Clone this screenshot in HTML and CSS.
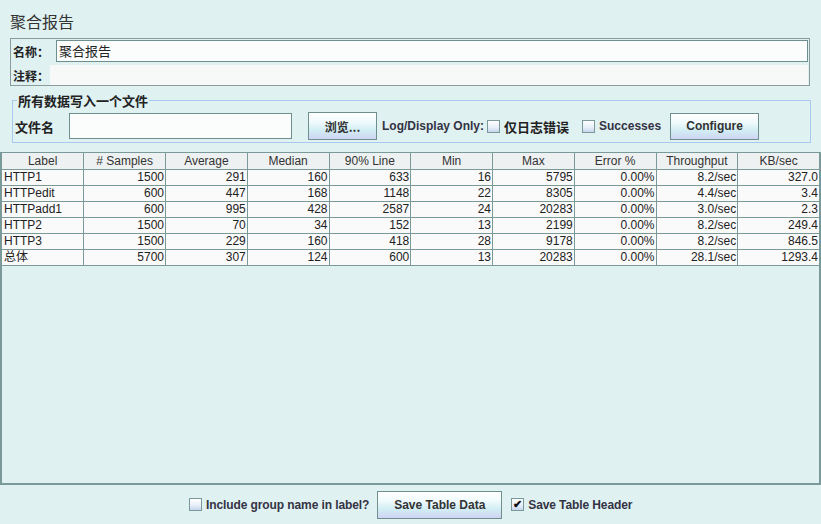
FILE: index.html
```html
<!DOCTYPE html>
<html>
<head>
<meta charset="utf-8">
<link rel="stylesheet" href="styles.css">
</head>
<body>
<div class="app">
  <div class="title">聚合报告</div>
  <div class="name-panel">
    <div class="prow r1">
      <span class="plabel w1">名称：</span>
      <div class="field namefield">聚合报告</div>
    </div>
    <div class="prow r2">
      <span class="plabel w2">注释：</span>
      <div class="field comment"></div>
    </div>
  </div>
  <fieldset class="file-panel">
    <legend>所有数据写入一个文件</legend>
    <div class="frow">
      <span class="flabel">文件名</span>
      <div class="field filefield"></div>
      <button class="btn browse">浏览...</button>
      <span class="blabel">Log/Display Only:</span>
      <span class="cb"></span><span class="blabel cjk">仅日志错误</span>
      <span class="cb cb2"></span><span class="blabel">Successes</span>
      <button class="btn configure">Configure</button>
    </div>
  </fieldset>
  <div class="table-pane">
    <table class="grid">
      <thead>
        <tr><th>Label</th><th># Samples</th><th>Average</th><th>Median</th><th>90% Line</th><th>Min</th><th>Max</th><th>Error %</th><th>Throughput</th><th>KB/sec</th></tr>
      </thead>
      <tbody>
        <tr><td class="l">HTTP1</td><td>1500</td><td>291</td><td>160</td><td>633</td><td>16</td><td>5795</td><td>0.00%</td><td>8.2/sec</td><td>327.0</td></tr>
        <tr><td class="l">HTTPedit</td><td>600</td><td>447</td><td>168</td><td>1148</td><td>22</td><td>8305</td><td>0.00%</td><td>4.4/sec</td><td>3.4</td></tr>
        <tr><td class="l">HTTPadd1</td><td>600</td><td>995</td><td>428</td><td>2587</td><td>24</td><td>20283</td><td>0.00%</td><td>3.0/sec</td><td>2.3</td></tr>
        <tr><td class="l">HTTP2</td><td>1500</td><td>70</td><td>34</td><td>152</td><td>13</td><td>2199</td><td>0.00%</td><td>8.2/sec</td><td>249.4</td></tr>
        <tr><td class="l">HTTP3</td><td>1500</td><td>229</td><td>160</td><td>418</td><td>28</td><td>9178</td><td>0.00%</td><td>8.2/sec</td><td>846.5</td></tr>
        <tr><td class="l">总体</td><td>5700</td><td>307</td><td>124</td><td>600</td><td>13</td><td>20283</td><td>0.00%</td><td>28.1/sec</td><td>1293.4</td></tr>
      </tbody>
    </table>
  </div>
  <div class="bottom">
    <span class="cb"></span><span class="blabel">Include group name in label?</span>
    <button class="btn savedata">Save Table Data</button>
    <span class="cb checked">&#10004;</span><span class="blabel">Save Table Header</span>
  </div>
</div>
</body>
</html>
```

FILE: styles.css
```css
html, body {
  margin: 0;
  padding: 0;
}
body {
  width: 821px;
  height: 524px;
  background: #e0f1f2;
  font-family: "Liberation Sans", Arial, "Noto Sans CJK SC", sans-serif;
  color: #222;
  overflow: hidden;
}
.app {
  display: flex;
  flex-direction: column;
  height: 524px;
}
.title {
  height: 28px;
  padding: 10px 0 0 10px;
  font-family: "Noto Sans CJK SC", sans-serif;
  font-size: 16px;
  line-height: 22px;
  color: #333;
}
.name-panel {
  margin: 0 11px 0 10px;
  height: 46px;
  border: 1px solid #8c9c9c;
  display: flex;
  flex-direction: column;
}
.prow {
  display: flex;
  align-items: center;
}
.r1 {
  height: 22px;
  padding-top: 1px;
}
.r2 {
  height: 20px;
  margin-top: 3px;
}
.plabel {
  font-family: "Noto Sans CJK SC", sans-serif;
  font-weight: bold;
  font-size: 12px;
  padding-left: 2px;
  color: #222;
}
.w1 { width: 43px; }
.w2 { width: 37px; }
.field {
  box-sizing: border-box;
  background: #fbfcfc;
}
.namefield {
  flex: 1;
  height: 22px;
  margin-right: 1px;
  border: 1px solid #6f8f8f;
  font-family: "Noto Sans CJK SC", sans-serif;
  font-size: 13px;
  line-height: 19px;
  padding-left: 2px;
}
.comment {
  flex: 1;
  height: 20px;
  margin-right: 1px;
  background: #f7f9f9;
}
.file-panel {
  margin: 7px 10px 0 12px;
  padding: 0 0 2px 2px;
  border: 1px solid #a8c8ee;
  height: 46px;
}
.file-panel legend {
  font-family: "Noto Sans CJK SC", sans-serif;
  font-weight: bold;
  font-size: 13px;
  line-height: 15px;
  padding: 0 1px;
  margin-left: 2px;
  color: #222;
}
.frow {
  display: flex;
  align-items: center;
  height: 34px;
  margin-top: 1px;
}
.flabel {
  font-family: "Noto Sans CJK SC", sans-serif;
  font-weight: bold;
  font-size: 13px;
  width: 54px;
}
.filefield {
  width: 223px;
  height: 26px;
  border: 1px solid #6f8f8f;
  margin-right: 16px;
}
.btn {
  box-sizing: border-box;
  border: 1px solid #6f8f8f;
  background: linear-gradient(#ffffff 0%, #f0fafc 35%, #d2eef4 65%, #cfd4f2 100%);
  font-family: "Liberation Sans", Arial, "Noto Sans CJK SC", sans-serif;
  font-weight: bold;
  font-size: 12px;
  color: #333;
  padding: 0;
  margin: 0;
}
.browse {
  width: 69px;
  height: 28px;
  margin-right: 5px;
  font-family: "Noto Sans CJK SC", sans-serif;
}
.blabel {
  font-weight: bold;
  font-size: 12px;
  color: #333344;
  white-space: nowrap;
}
.blabel.cjk {
  font-family: "Noto Sans CJK SC", sans-serif;
  font-size: 13px;
  color: #222;
  margin-right: 13px;
}
.cb {
  box-sizing: border-box;
  display: inline-block;
  width: 13px;
  height: 13px;
  border: 1px solid #7a9a9a;
  background: linear-gradient(#ffffff, #e6eef8 60%, #c8d4ee);
  margin: 0 4px 0 3px;
  font-size: 11px;
  line-height: 11px;
  text-align: center;
  color: #111;
}
.cb2 { margin-left: 0; }
.configure {
  width: 89px;
  height: 27px;
  margin-left: 9px;
}
.table-pane {
  margin-top: 9px;
  flex: 1;
  box-sizing: border-box;
  border-left: 2px solid #7a9a9a;
  border-bottom: 2px solid #7a9a9a;
  border-right: 2px solid #7a9a9a;
  border-top: 1px solid #7a9a9a;
}
.grid {
  border-collapse: collapse;
  table-layout: fixed;
  width: 818px;
  font-size: 12px;
  color: #222;
}
.grid th {
  height: 16px;
  font-weight: normal;
  background: #eef1f1;
  border-right: 1px solid #7a9a9a;
  border-bottom: 1px solid #7a9a9a;
  text-align: center;
  padding: 0;
  color: #333;
}
.grid td {
  height: 15px;
  background: #fafafa;
  border-right: 1px solid #7a9a9a;
  border-bottom: 1px solid #7a9a9a;
  text-align: right;
  padding: 0 1px;
  line-height: 15px;
  white-space: nowrap;
}
.grid td.l {
  text-align: left;
  padding-left: 2px;
}
.bottom {
  height: 39px;
  display: flex;
  align-items: center;
  padding-left: 185px;
}
.bottom .blabel {
  margin-right: 8px;
  font-size: 12px;
  letter-spacing: -0.1px;
}
.bottom .cb {
  margin: 0 4px;
}
.savedata {
  width: 125px;
  height: 28px;
  margin-right: 5px;
}
.checked {
  font-weight: bold;
}
```
